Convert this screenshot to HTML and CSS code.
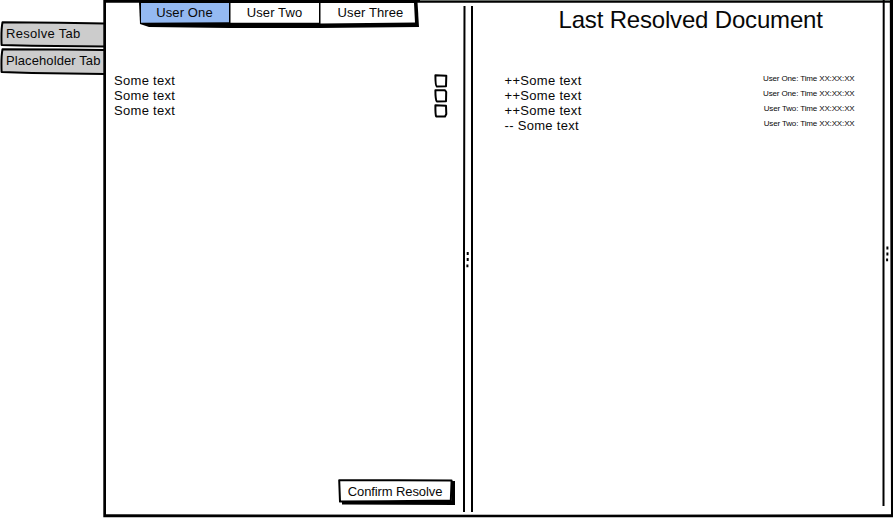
FILE: index.html
```html
<!DOCTYPE html>
<html lang="en">
<head>
<meta charset="utf-8">
<title>Last Resolved Document</title>
<link rel="stylesheet" href="styles.css">
</head>
<body>
<div class="app">
  <nav class="side">
    <div class="side-tab">
      <svg class="sketch" viewBox="0 0 104 27"><path fill="#ccc" d="M2 1.5 60 1 104 2V26H68L2 25Z"/><path class="ink" d="M104 2.5 60 1.8 2.5 1.2Q1 9 1.6 24L32 24.8 104 25.5"/></svg>
      <span class="t-resolve">Resolve Tab</span>
    </div>
    <div class="side-tab">
      <svg class="sketch" viewBox="0 0 104 27"><path fill="#ccc" d="M2 1.5H104V26H68L2 25Z"/><path class="ink" d="M104 2 60 1.6 2.5 1.2Q1 9 1.6 24L32 25 104 26"/></svg>
      <span class="t-place">Placeholder Tab</span>
    </div>
  </nav>
  <main class="window">
    <svg class="sketch frame" viewBox="0 0 790 518">
      <path fill="#000" d="M.3 0H790V517.3H.3ZM3 2.8V514.3L450 514.8 788 514.3 786.8 2.8H317Z" fill-rule="evenodd"/>
      <path fill="#666b66" d="M317 0H787V1H317Z"/>
    </svg>
    <section class="panel">
      <div class="tabs">
        <svg class="sketch" viewBox="0 0 281 29">
          <path fill="#000" d="M0 2H278.5L280 27 181 28H90L10 27 1 24Z"/>
          <path fill="#94b9f2" d="M2 3H90V22.3L2 22.7Z"/>
          <path fill="#fff" d="M91.5 3H180V22.8H91.5ZM181.5 3H275L276 22.5 181.5 23.5Z"/>
        </svg>
        <span class="tab">User One</span><span class="tab">User Two</span><span class="tab t-three">User Three</span>
      </div>
      <ul class="rows">
        <li><span>Some text</span><svg class="check" viewBox="0 0 14 14"><path d="M1.4 1.3 12.3 1.8 12 12.2 2.8 12.6Q1.4 12 1.4 1.3Z"/></svg></li>
        <li><span>Some text</span><svg class="check" viewBox="0 0 14 14"><path d="M1.4 1.3 11 1.2 12.2 3 12 12.3 2.8 12.4Q1.4 11 1.4 1.3Z"/></svg></li>
        <li><span>Some text</span><svg class="check" viewBox="0 0 14 14"><path d="M1.4 1.3 12 1.8 12.3 10 11 12.6 2.2 12.5Q1.3 11 1.4 1.3Z"/></svg></li>
      </ul>
      <button class="confirm">
        <svg class="sketch" viewBox="0 0 118 27"><path fill="#000" d="M4 4 117 2V26L4 25.5Z"/><path fill="#fff" d="M1.5 1.2 113.5 1.5V21.5L1.5 22.3Z"/><path class="ink" d="M1.2 1.2 60 1.2 113.6 1.5 112.8 21.5 50 22.3 2 22.6Z"/></svg>
        <span>Confirm Resolve</span>
      </button>
    </section>
    <svg class="splitter" viewBox="0 0 11 506"><path d="M1.5 0 1 245V506M9 0V506"/><path class="dots" d="M4.7 246v3m0 3v3m-.3 3.5v2.8"/></svg>
    <section class="document">
      <h1>Last Resolved Document</h1>
      <ul class="rows changes">
        <li><span>++Some text</span><small>User One: Time XX:XX:XX</small></li>
        <li><span>++Some text</span><small>User One: Time XX:XX:XX</small></li>
        <li><span>++Some text</span><small>User Two: Time XX:XX:XX</small></li>
        <li><span class="removed">-- Some text</span><small>User Two: Time XX:XX:XX</small></li>
      </ul>
    </section>
    <svg class="splitter edge" viewBox="0 0 11 506"><path d="M1.7 -6 1.5 255V500"/><path class="dots" d="M5.4 240.5v3m0 3v3m-.3 3v2.8"/></svg>
  </main>
</div>
</body>
</html>
```
FILE: styles.css
```css
* { box-sizing: border-box; }
body { margin: 0; background: #fff; color: #080808; font: 13px/15px "Liberation Sans", Arial, sans-serif; overflow: hidden; }
.app { display: flex; width: 893px; height: 518px; }
.sketch { position: absolute; inset: 0; width: 100%; height: 100%; z-index: -1; overflow: visible; }
.ink { fill: none; stroke: #000; stroke-width: 2; stroke-linejoin: round; }

.side { width: 103px; padding-top: 21px; }
.side-tab { position: relative; width: 104px; height: 27px; padding: 5px 0 0 6px; white-space: nowrap; }
.t-resolve { letter-spacing: .3px; }
.t-place { letter-spacing: .1px; }

.window { position: relative; display: flex; width: 790px; height: 518px; }
.panel { display: flex; flex-direction: column; width: 360px; padding: 0 9px 12px 11px; }
.tabs { position: relative; display: grid; grid-template-columns: 90px 90px 102px; width: 281px; height: 29px; margin-left: 25px; }
.tab { padding: 5px 0 0 1px; text-align: center; letter-spacing: .1px; }

.rows { list-style: none; margin: 44px 6px 0 0; padding: 0; letter-spacing: .3px; }
.rows li { display: flex; justify-content: space-between; align-items: center; height: 15px; }
.check { width: 14px; height: 14px; overflow: visible; }
.check path { fill: #fff; stroke: #000; stroke-width: 2; stroke-linejoin: round; }

.confirm { position: relative; z-index: 0; align-self: flex-end; width: 118px; height: 27px; margin: auto -2px 0 0; padding: 0 3px 3px 0; border: 0; background: none; color: #080808; font: inherit; letter-spacing: -.1px; white-space: nowrap; }

.splitter { flex: none; width: 11px; height: 506px; margin-top: 6px; fill: none; stroke: #000; stroke-width: 2; overflow: visible; }
.dots { stroke-width: 2; }

.document { width: 409px; padding-left: 30px; }
.document h1 { margin: 4px 0 0; padding-left: 55px; font-size: 24px; font-weight: 400; line-height: 32px; letter-spacing: -.18px; white-space: nowrap; }
.changes { width: 351px; margin: 37px 0 0; }
.changes li > span { padding-left: 1px; }
.changes small { font-size: 8px; line-height: 10px; letter-spacing: -.14px; padding-bottom: 4px; white-space: nowrap; }
```
